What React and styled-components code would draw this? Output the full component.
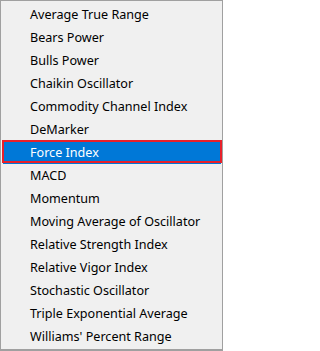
import React from 'react';
import styled, { createGlobalStyle } from 'styled-components';

const GlobalStyle = createGlobalStyle`
  html, body {
    margin: 0;
    padding: 0;
    background: #ffffff;
  }
`;

const Menu = styled.ul`
  box-sizing: border-box;
  width: 223px;
  height: 351px;
  margin: 0;
  padding: 2px 1px 1px 2px;
  list-style: none;
  background: #f0f0f0;
  border: 1px solid #a0a0a0;
  border-bottom-width: 2px;
  font-family: "Noto Sans", "Liberation Sans", sans-serif;
  font-size: 12.6px;
`;

const Item = styled.li`
  position: relative;
  box-sizing: border-box;
  height: 23px;
  display: flex;
  align-items: center;
  padding-left: 27px;
  white-space: nowrap;
  color: ${({ active }) => (active ? '#ffffff' : '#000000')};
  background: ${({ active }) => (active ? '#0078d7' : 'transparent')};

  // red annotation frame around the picked entry
  &::after {
    content: '';
    display: ${({ active }) => (active ? 'block' : 'none')};
    position: absolute;
    top: -1px;
    left: -1px;
    right: -1px;
    bottom: 1px;
    border: 2px solid #e8202a;
  }
`;

const indicators = [
  'Average True Range',
  'Bears Power',
  'Bulls Power',
  'Chaikin Oscillator',
  'Commodity Channel Index',
  'DeMarker',
  'Force Index',
  'MACD',
  'Momentum',
  'Moving Average of Oscillator',
  'Relative Strength Index',
  'Relative Vigor Index',
  'Stochastic Oscillator',
  'Triple Exponential Average',
  "Williams' Percent Range",
];

const App = () => (
  <>
    <GlobalStyle />
    <Menu>
      {indicators.map((name) => (
        <Item key={name} active={name === 'Force Index' ? 1 : 0}>
          {name}
        </Item>
      ))}
    </Menu>
  </>
);

export default App;
